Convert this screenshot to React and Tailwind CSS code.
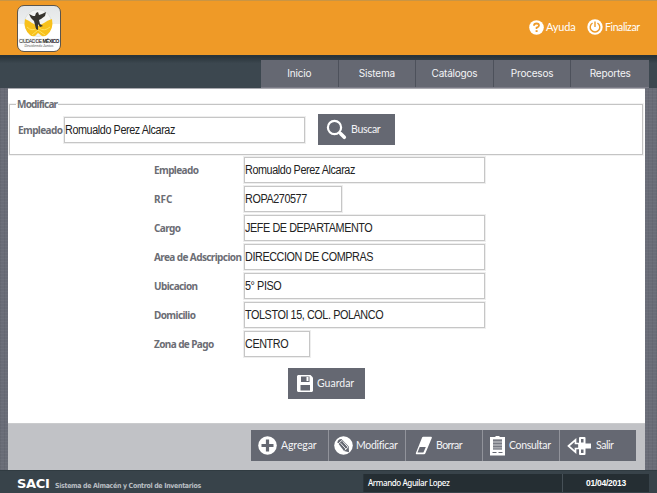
import React from "react";

const linen = "bg-[#696c77] bg-[repeating-linear-gradient(0deg,#ffffff08_0_1px,transparent_1px_3px),repeating-linear-gradient(90deg,#0000000c_0_1px,transparent_1px_4px)]";

function Logo() {
  return (
    <div className="ml-[17px] mt-[4px] flex h-[47px] w-[44px] flex-col items-center overflow-hidden rounded-[7px] border border-[#5b554c] bg-gradient-to-b from-[#e2e5e6] to-white">
      <svg width="42" height="32" viewBox="0 0 42 32" className="shrink-0">
        <rect y="18" width="42" height="14" fill="#fff" />
        <circle cx="20" cy="17" r="13.5" fill="#f3f4f2" stroke="#d4d6d4" strokeWidth=".6" />
        <path d="M7 13 Q11 14.5 14 17 L20 20 L26 17 Q29 14.5 34 13 Q36 23 29 29 Q26 31 24 30 L20 27 L17 30 Q14 31 12 29 Q5 23 7 13Z" fill="#f8c11c" />
        <path d="M9 21 Q14 26 19 22 M32 21 Q26 26 21 22 M14 29 L20 24 L27 29" fill="none" stroke="#ffe05c" strokeWidth="1" />
        <path d="M11 8 L15 10 L17 10 L18 7 L20 6 L21 9 L24 8 L28 6 L27 10 L23 13 L21 14 L22 18 L25 20 L22 21 L20 18 L20 24 L18 23 L16 15 L13 12Z" fill="#38362f" />
      </svg>
      <span className="mt-[1px] whitespace-nowrap font-['Liberation_Sans'] text-[5px] leading-[5px] tracking-[-0.55px] text-[#222]">CIUDAD DE <b>MÉXICO</b></span>
      <span className="whitespace-nowrap font-['Liberation_Sans'] text-[3.5px] italic leading-[4px] text-[#555]">Decidiendo Juntos</span>
    </div>
  );
}

function Button({ icon, label, className, textClass }) {
  return (
    <div className={"flex h-[31px] shrink-0 items-center bg-[#656872] text-white " + className}>
      {icon}
      <span className={"whitespace-nowrap pb-px font-['Lato',sans-serif] text-[10.5px] leading-[14px] text-[#f4f4f6] " + textClass}>{label}</span>
    </div>
  );
}

function Input({ className, children }) {
  return (
    <div className={"flex h-[26px] shrink-0 items-center whitespace-nowrap border border-[#c6c6c6] font-['Liberation_Sans',sans-serif] text-[12px] leading-[14px] text-[#222] shadow-[0_0_0_1px_#eeeeee] " + className}>
      <span className="origin-left scale-x-[0.9] tracking-[-0.45px]">{children}</span>
    </div>
  );
}

const labelFont = "whitespace-nowrap font-['Noto_Sans',sans-serif] text-[10px] font-bold leading-[14px] text-[#6b6d74]";

const fields = [
  ["Empleado", "Romualdo Perez Alcaraz", "w-[241px]"],
  ["RFC", "ROPA270577", "w-[98px]"],
  ["Cargo", "JEFE DE DEPARTAMENTO", "w-[241px]"],
  ["Area de Adscripcion", "DIRECCION DE COMPRAS", "w-[241px]"],
  ["Ubicacion", "5° PISO", "w-[241px]"],
  ["Domicilio", "TOLSTOI 15, COL. POLANCO", "w-[241px]"],
  ["Zona de Pago", "CENTRO", "w-[66px]"],
];

const searchIcon = (
  <svg width="22" height="22" viewBox="0 0 22 22" fill="none" stroke="#fff">
    <circle cx="8.5" cy="8.5" r="6.6" strokeWidth="2.2" />
    <path d="M13.2 13.2 L15 15" strokeWidth="2.5" />
    <path d="M15 15 L18.3 18.3" strokeWidth="3.6" strokeLinecap="round" />
  </svg>
);
const saveIcon = (
  <svg width="16" height="17" viewBox="0 0 16 17">
    <path d="M1 0H13.5L16 2.5V16L15 17H1L0 16V1Z" fill="#fff" />
    <path d="M4 1.5H12.5V7H4Z M3.5 10H13V15.5H3.5Z" fill="#656872" />
    <path d="M9.5 2H11.5V6H9.5Z" fill="#fff" />
  </svg>
);
const addIcon = (
  <svg width="19" height="19" viewBox="0 0 19 19">
    <circle cx="9.5" cy="9.5" r="9.3" fill="#fff" />
    <path d="M9.5 3.5V15.5M3.5 9.5H15.5" stroke="#656872" strokeWidth="3.2" />
  </svg>
);
const editIcon = (
  <svg width="19" height="19" viewBox="0 0 19 19">
    <circle cx="9.5" cy="9.5" r="9.3" fill="#fff" />
    <path d="M3.5 6.5 Q3.5 3 7.5 3 L14.7 10.5 L15 16.2 L10 15Z" fill="#656872" />
    <path d="M4 8 L8.6 3.8 M6.6 7.2 L12 13.2 M8.8 5.4 L13.8 11 M10.6 14.4 L14 11.2" stroke="#fff" strokeWidth=".9" />
  </svg>
);
const eraseIcon = (
  <svg width="18" height="19" viewBox="0 0 18 19">
    <path d="M7.2 1.3 Q7.5.7 8.3.7H16Q17.2.7 16.8 2L10.5 17Q10 18.2 9 18.2H1.5Q.5 18.2.9 17Z" fill="#fff" />
    <path d="M4.7 11 H10.8 L8.4 16.6 H2.5Z" fill="#656872" />
  </svg>
);
const listIcon = (
  <svg width="15" height="20" viewBox="0 0 15 20">
    <path d="M0 1H5L6 0H9L10 1H15V19.5H0Z" fill="#fff" />
    <path d="M3 3H12V13.5H3Z" fill="#a5a7ad" />
    <path d="M3 4.5H12M3 7.5H12M3 10.5H12M3 13H12" stroke="#777a83" />
    <path d="M2.5 16.5H6.5M8.5 16.5H12.5" stroke="#656872" />
  </svg>
);
const exitIcon = (
  <svg width="24" height="20" viewBox="0 0 24 20">
    <path d="M12 1.8Q12 1 13 1H17.5Q18.5 1 18.5 2V18Q18.5 19 17.5 19H13Q12 19 12 18Z" fill="#fff" />
    <path d="M14 3H16.5V6.5H14ZM14 13.5H16.5V17H14Z" fill="#656872" />
    <path d="M1.5 10 L8.5 3.8V7.5H12V12.5H8.5V16.2Z" fill="#656872" stroke="#fff" strokeWidth="1.7" />
    <path d="M14 7.5H24V12.5H14Z" fill="#fff" />
  </svg>
);

export default function App() {
  return (
    <div className={"flex h-[493px] w-[657px] flex-col overflow-hidden " + linen}>
      <header className="flex h-[55px] shrink-0 border-t border-[#c99544] bg-[#ef9a27] text-white">
        <Logo />
        <div className="ml-auto flex h-[52px] items-center pr-[16px] font-['Lato',sans-serif] text-[11px] leading-[14px]">
          <svg width="15" height="15" viewBox="0 0 15 15" className="mr-[2px]">
            <circle cx="7.5" cy="7.5" r="7.3" fill="#fff" />
            <path d="M5 5.8Q5 3.5 7.5 3.5T10 5.6Q10 7 7.6 7.7V9" fill="none" stroke="#ef9a27" strokeWidth="1.8" />
            <path d="M6.6 10.2h2v1.8h-2z" fill="#ef9a27" />
          </svg>
          <span className="w-[41px] whitespace-nowrap tracking-[-0.2px]">Ayuda</span>
          <svg width="16" height="16" viewBox="0 0 16 16" className="mr-[2px]">
            <circle cx="8" cy="8" r="7.7" fill="#fff" />
            <path d="M5.6 4A4.8 4.8 0 1 0 10.4 4M8 2.5V8" fill="none" stroke="#ef9a27" strokeWidth="1.4" />
          </svg>
          <span className="w-[36px] whitespace-nowrap text-[10.5px] tracking-[-0.4px]">Finalizar</span>
        </div>
      </header>
      <nav className="flex h-[33px] shrink-0 bg-gradient-to-b from-[#29343a] from-5% to-[#3c474f] to-25% pl-[261px] pr-2 pt-[5px]">
        <div className="grid w-[388px] grid-cols-5 border-b border-[#7b7c87] bg-[#656872]">
          {["Inicio", "Sistema", "Catálogos", "Procesos", "Reportes"].map((t) => (
            <div key={t} className="flex items-center justify-center whitespace-nowrap border-r border-[#4d515b] pb-px font-['Inter',sans-serif] text-[10px] leading-none tracking-[-0.2px] text-[#f4f4f6] last:border-r-0">{t}</div>
          ))}
        </div>
      </nav>
      <main className="ml-2 flex w-[637px] grow flex-col border-t border-[#aaaab0] bg-white">
        <fieldset className="ml-px mt-[8px] flex h-[58px] w-[634px] shrink-0 items-start border border-[#c4c4c4] pl-2 shadow-[0_0_0_1px_#f2f2f2]">
          <legend className={"ml-[-2px] h-[14px] px-[1px] tracking-[-0.8px] " + labelFont}>Modificar</legend>
          <span className={"mt-[12px] w-[46px] shrink-0 tracking-[-0.6px] " + labelFont}>Empleado</span>
          <Input className="mt-[6px] w-[241px]">Romualdo Perez Alcaraz</Input>
          <Button className="ml-[13px] mt-[3px] w-[77px] pl-[8px]" icon={searchIcon} label="Buscar" textClass="ml-[3px] tracking-[-0.3px]" />
        </fieldset>
        <div className="ml-[146px] mt-[2px] flex flex-col gap-[3px]">
          {fields.map(([label, value, width]) => (
            <div key={label} className="flex items-center">
              <span className={"w-[90px] shrink-0 " + labelFont + (label === "RFC" ? "" : " tracking-[-0.6px]")}>{label}</span>
              <Input className={width}>{value}</Input>
            </div>
          ))}
        </div>
        <Button className="ml-[280px] mt-[11px] w-[77px] pl-[9px]" icon={saveIcon} label="Guardar" textClass="ml-[4px]" />
        <div className="mt-auto flex h-[47px] shrink-0 border-t border-[#cacbcd] bg-[#c1c2c6] pl-[243px] pt-[6px]">
          <Button className="w-[77px] pl-[7px]" icon={addIcon} label="Agregar" textClass="ml-[4px] tracking-[-0.1px]" />
          <Button className="w-[77px] border-l border-[#91939b] pl-[5px]" icon={editIcon} label="Modificar" textClass="ml-[3px] tracking-[-0.3px]" />
          <Button className="w-[77px] border-l border-[#91939b] pl-[9px]" icon={eraseIcon} label="Borrar" textClass="ml-[3px] tracking-[-0.55px]" />
          <Button className="w-[77px] border-l border-[#91939b] pl-[7px]" icon={listIcon} label="Consultar" textClass="ml-[4px] tracking-[-0.3px]" />
          <Button className="w-[77px] border-l border-[#91939b] pl-[7px]" icon={exitIcon} label="Salir" textClass="ml-[5px] tracking-[-0.45px]" />
        </div>
      </main>
      <footer className="flex h-[23px] shrink-0 border-t border-[#303b41] bg-[#38434a] pl-[17px] pr-2">
        <div className="flex w-[346px] shrink-0 items-baseline whitespace-nowrap pt-[4px] font-['DejaVu_Sans',sans-serif] font-bold">
          <span className="w-[38px] text-[13px] leading-[18px] tracking-[-0.3px] text-white">SACI</span>
          <span className="font-['DejaVu_Sans_Condensed','DejaVu_Sans',sans-serif] text-[7px] tracking-[-0.33px] text-[#b9bec2]">Sistema de Almacén y Control de Inventarios</span>
        </div>
        <div className="mt-[3px] flex h-[18px] grow border-l border-[#2b353b] bg-[#252e33] leading-[18px] text-white">
          <span className="w-[199px] whitespace-nowrap border-r border-[#465057] pl-[4px] font-['Noto_Sans',sans-serif] text-[8px] font-medium tracking-[-0.4px]">Armando Aguilar Lopez</span>
          <span className="grow text-center font-['Liberation_Sans',sans-serif] text-[8.5px] font-bold tracking-[-0.25px]">01/04/2013</span>
        </div>
      </footer>
    </div>
  );
}
